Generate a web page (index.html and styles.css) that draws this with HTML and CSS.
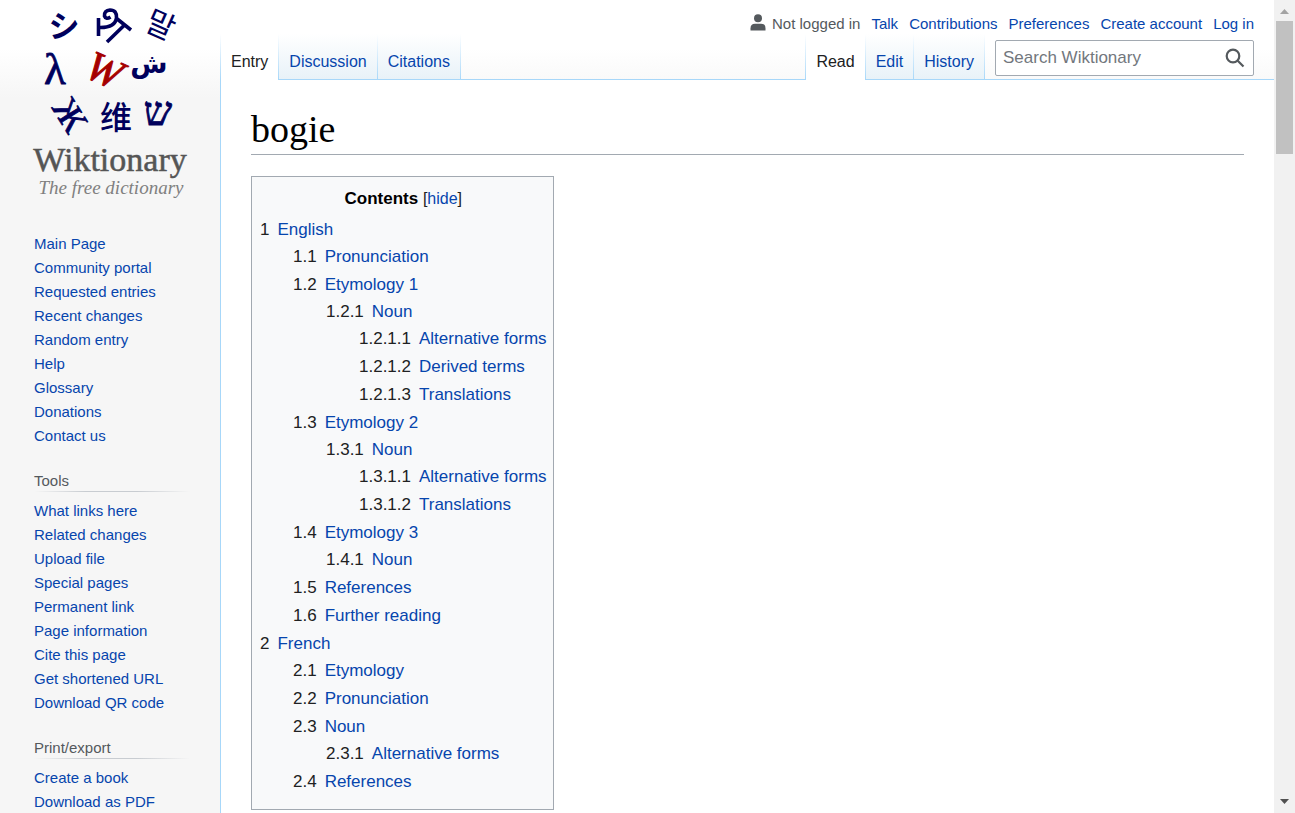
FILE: index.html
```html
<!DOCTYPE html>
<html lang="en">
<head>
<meta charset="utf-8">
<title>bogie - Wiktionary</title>
<link rel="stylesheet" href="styles.css">
</head>
<body>
<div class="page">
  <aside class="sidebar">
    <a class="logo" href="#" aria-label="Wiktionary main page">
      <svg viewBox="20 0 180 204" width="180" height="204">
        <g class="logo-glyphs" text-anchor="middle">
          <text class="cjk-jp" x="64" y="37" font-size="31">シ</text>
          <path class="logo-stroke" d="M98.500 36V18M99 27.500Q115 28 116.500 18Q117 10 110 10Q104 10.500 104.500 16Q106 20 110.500 17M107 42L124.500 25M116 18L131 30"/>
          <text class="cjk-kr" transform="translate(160 26) rotate(24)" y="10" font-size="31">말</text>
          <text class="serif thin" x="55" y="84" font-size="45">λ</text>
          <text class="serif logo-w" transform="translate(104 71) rotate(24)" y="13" font-size="42">W</text>
          <text class="sans" x="149" y="73" font-size="27">ش</text>
          <text class="serif thin" transform="translate(70 115) rotate(58)" y="12" font-size="36">Ж</text>
          <text class="cjk-sc" x="116" y="129" font-size="32">维</text>
          <text class="serif thin" x="158" y="125" font-size="40">ש</text>
        </g>
        <text class="wordmark" x="110" y="171" text-anchor="middle">Wiktionary</text>
        <text class="tagline" x="111" y="194" text-anchor="middle">The free dictionary</text>
      </svg>
    </a>
    <nav class="portal portal-main" aria-label="Navigation">
      <ul>
        <li><a href="#">Main Page</a></li>
        <li><a href="#">Community portal</a></li>
        <li><a href="#">Requested entries</a></li>
        <li><a href="#">Recent changes</a></li>
        <li><a href="#">Random entry</a></li>
        <li><a href="#">Help</a></li>
        <li><a href="#">Glossary</a></li>
        <li><a href="#">Donations</a></li>
        <li><a href="#">Contact us</a></li>
      </ul>
    </nav>
    <nav class="portal" aria-labelledby="tools">
      <h3 id="tools">Tools</h3>
      <ul>
        <li><a href="#">What links here</a></li>
        <li><a href="#">Related changes</a></li>
        <li><a href="#">Upload file</a></li>
        <li><a href="#">Special pages</a></li>
        <li><a href="#">Permanent link</a></li>
        <li><a href="#">Page information</a></li>
        <li><a href="#">Cite this page</a></li>
        <li><a href="#">Get shortened URL</a></li>
        <li><a href="#">Download QR code</a></li>
      </ul>
    </nav>
    <nav class="portal" aria-labelledby="print">
      <h3 id="print">Print/export</h3>
      <ul>
        <li><a href="#">Create a book</a></li>
        <li><a href="#">Download as PDF</a></li>
      </ul>
    </nav>
  </aside>
  <div class="column">
    <header class="head">
      <ul class="personal">
        <li class="anon">
          <svg viewBox="0 0 16 17" width="16" height="17" aria-hidden="true"><circle cx="8" cy="4.2" r="4"/><path d="M.5 16.5v-2.2Q.5 9.800 5 9.800h6q4.500 0 4.500 4.500v2.200z"/></svg>
          <span>Not logged in</span>
        </li>
        <li><a href="#">Talk</a></li>
        <li><a href="#">Contributions</a></li>
        <li><a href="#">Preferences</a></li>
        <li><a href="#">Create account</a></li>
        <li><a href="#">Log in</a></li>
      </ul>
      <div class="bar">
        <ul class="tabs">
          <li class="active"><a href="#">Entry</a></li>
          <li><a href="#">Discussion</a></li>
          <li><a href="#">Citations</a></li>
        </ul>
        <ul class="tabs views">
          <li class="active"><a href="#">Read</a></li>
          <li><a href="#">Edit</a></li>
          <li><a href="#">History</a></li>
        </ul>
        <form class="search">
          <input type="text" placeholder="Search Wiktionary" aria-label="Search Wiktionary">
          <button type="button" aria-label="Search"><svg viewBox="0 0 20 20" width="20" height="20" aria-hidden="true"><circle cx="8" cy="8" r="6.300"/><path d="M12.500 12.500l6 6"/></svg></button>
        </form>
      </div>
    </header>
    <main class="content">
      <h1>bogie</h1>
      <nav class="toc" aria-labelledby="contents">
        <div class="toc-title"><h2 id="contents">Contents</h2> <span>[<button type="button">hide</button>]</span></div>
        <ul>
          <li><a href="#"><span>1</span>English</a>
            <ul>
              <li><a href="#"><span>1.1</span>Pronunciation</a></li>
              <li><a href="#"><span>1.2</span>Etymology 1</a>
                <ul>
                  <li><a href="#"><span>1.2.1</span>Noun</a>
                    <ul>
                      <li><a href="#"><span>1.2.1.1</span>Alternative forms</a></li>
                      <li><a href="#"><span>1.2.1.2</span>Derived terms</a></li>
                      <li><a href="#"><span>1.2.1.3</span>Translations</a></li>
                    </ul>
                  </li>
                </ul>
              </li>
              <li><a href="#"><span>1.3</span>Etymology 2</a>
                <ul>
                  <li><a href="#"><span>1.3.1</span>Noun</a>
                    <ul>
                      <li><a href="#"><span>1.3.1.1</span>Alternative forms</a></li>
                      <li><a href="#"><span>1.3.1.2</span>Translations</a></li>
                    </ul>
                  </li>
                </ul>
              </li>
              <li><a href="#"><span>1.4</span>Etymology 3</a>
                <ul>
                  <li><a href="#"><span>1.4.1</span>Noun</a></li>
                </ul>
              </li>
              <li><a href="#"><span>1.5</span>References</a></li>
              <li><a href="#"><span>1.6</span>Further reading</a></li>
            </ul>
          </li>
          <li><a href="#"><span>2</span>French</a>
            <ul>
              <li><a href="#"><span>2.1</span>Etymology</a></li>
              <li><a href="#"><span>2.2</span>Pronunciation</a></li>
              <li><a href="#"><span>2.3</span>Noun</a>
                <ul>
                  <li><a href="#"><span>2.3.1</span>Alternative forms</a></li>
                </ul>
              </li>
              <li><a href="#"><span>2.4</span>References</a></li>
            </ul>
          </li>
        </ul>
      </nav>
    </main>
  </div>
</div>
<div class="scrollbar" aria-hidden="true">
  <svg class="arrow-up" viewBox="0 0 9 5" width="9" height="5"><path d="M0 5L4.500 0L9 5z"/></svg>
  <div class="thumb"></div>
  <svg class="arrow-down" viewBox="0 0 9 5" width="9" height="5"><path d="M0 0L4.500 5L9 0z"/></svg>
</div>
</body>
</html>
```
FILE: styles.css
```css
* { box-sizing: border-box; }

body {
  margin: 0;
  height: 100vh;
  display: flex;
  overflow: hidden;
  background: #f6f6f6;
  color: #202122;
  font-family: "Liberation Sans", Arial, sans-serif;
  font-size: 16px;
}

ul { list-style: none; margin: 0; padding: 0; }
a { color: #0645ad; text-decoration: none; }
button { border: 0; padding: 0; background: none; font: inherit; cursor: pointer; }

.page {
  flex: 1;
  min-width: 0;
  display: grid;
  grid-template-columns: 220px 1fr;
  overflow: hidden;
  background: linear-gradient(#fff 50%, #f6f6f6 100%) top / 100% 98px no-repeat;
}

/* Sidebar */
.logo { display: block; margin: 0 20px 28px; }
.logo svg { display: block; overflow: visible; }
.logo-glyphs { fill: #00005c; }
.logo-stroke { fill: none; stroke: #00005c; stroke-width: 3.6; }
.serif { font-family: "Liberation Serif", serif; }
.thin { stroke: #00005c; stroke-width: 0.8; }
.sans { font-family: "DejaVu Sans", sans-serif; font-weight: bold; }
.cjk-jp { font-family: "Noto Sans CJK JP", sans-serif; font-weight: bold; }
.cjk-kr { font-family: "Noto Sans CJK KR", sans-serif; }
.cjk-sc { font-family: "Noto Sans CJK SC", sans-serif; font-weight: 500; }
.logo-w { fill: #a50000; stroke: #a50000; stroke-width: 1; font-style: italic; }
.wordmark { font: 34px "Liberation Serif", serif; fill: #555; stroke: #555; stroke-width: 0.5; }
.tagline { font: italic 19px "Liberation Serif", serif; fill: #808080; }

.portal { padding: 0 30px 0 34px; font-size: 15px; line-height: 24px; }
.portal + .portal { margin-top: 23px; }
.portal h3 {
  margin: 0 0 7px;
  padding-bottom: 1px;
  font-size: 15px;
  font-weight: normal;
  line-height: 20px;
  color: #54595d;
  background: linear-gradient(to right, rgba(200, 204, 209, 0), #c8ccd1 33%, #c8ccd1 66%, rgba(200, 204, 209, 0)) bottom / 100% 1px no-repeat;
}

/* Header */
.column { min-width: 0; display: flex; flex-direction: column; }
.head { padding-top: 14px; box-shadow: inset 0 -1px #a7d7f9; }
.personal {
  display: flex;
  justify-content: flex-end;
  gap: 11px;
  padding-right: 20px;
  font-size: 15px;
  line-height: 20px;
}
.anon { display: flex; gap: 6px; color: #54595d; }
.anon svg { fill: #54595d; }
.bar { display: flex; height: 46px; padding-right: 20px; }

.tabs {
  display: flex;
  padding-left: 1px;
  background: linear-gradient(to top, #a7d7f9, #fff) left / 1px 100% no-repeat;
}
.tabs li {
  padding-right: 1px;
  background: linear-gradient(to top, #a7d7f9, #fff) right / 1px 100% no-repeat;
}
.tabs a {
  display: block;
  height: 46px;
  padding: 18px 10px 7px;
  line-height: 20px;
  border-bottom: 1px solid #a7d7f9;
  background: linear-gradient(to top, #e8f2f8, #fff);
}
.tabs .active a { color: #202122; background: #fff; border-bottom: 0; }
.views { margin-left: auto; }

.search {
  display: flex;
  align-items: center;
  width: 259px;
  height: 36px;
  margin: 6px 0 0 10px;
  padding: 0 8px 0 7px;
  border: 1px solid #a2a9b1;
  border-radius: 2px;
  background: #fff;
}
.search input {
  flex: 1;
  min-width: 0;
  padding: 0;
  border: 0;
  outline: 0;
  background: none;
  font: 17px "Liberation Sans", Arial, sans-serif;
}
.search input::placeholder { color: #72777d; opacity: 1; }
.search button { display: flex; }
.search svg { fill: none; stroke: #54595d; stroke-width: 2.2; }

/* Article */
.content {
  flex: 1;
  padding: 25px 30px;
  border-left: 1px solid #a7d7f9;
  background: #fff;
}
h1 {
  margin: 0 0 21px;
  padding-bottom: 1px;
  border-bottom: 1px solid #a2a9b1;
  color: #000;
  font: 38px/48px "Liberation Serif", serif;
}

.toc {
  width: fit-content;
  padding: 8px 6px 14px 8px;
  border: 1px solid #a2a9b1;
  background: #f8f9fa;
  font-size: 17px;
  line-height: 27px;
}
.toc-title { margin-bottom: 4px; text-align: center; }
.toc-title h2 { display: inline; margin: 0; color: #000; font-size: 17px; }
.toc-title span { font-size: 16px; }
.toc-title button { color: #0645ad; }
.toc li + li { margin-top: 1px; }
.toc ul ul { padding-left: 33px; }
.toc a { display: flex; gap: 8px; }
.toc a span { color: #202122; }

/* Window scrollbar */
.scrollbar {
  flex: 0 0 21px;
  display: flex;
  flex-direction: column;
  align-items: center;
  padding: 9px 0;
  background: #f1f1f1;
}
.thumb { width: 17px; height: 133px; margin-top: 7px; background: #c1c1c1; }
.arrow-up { fill: #a3a3a3; }
.arrow-down { margin-top: auto; fill: #505050; }
```
